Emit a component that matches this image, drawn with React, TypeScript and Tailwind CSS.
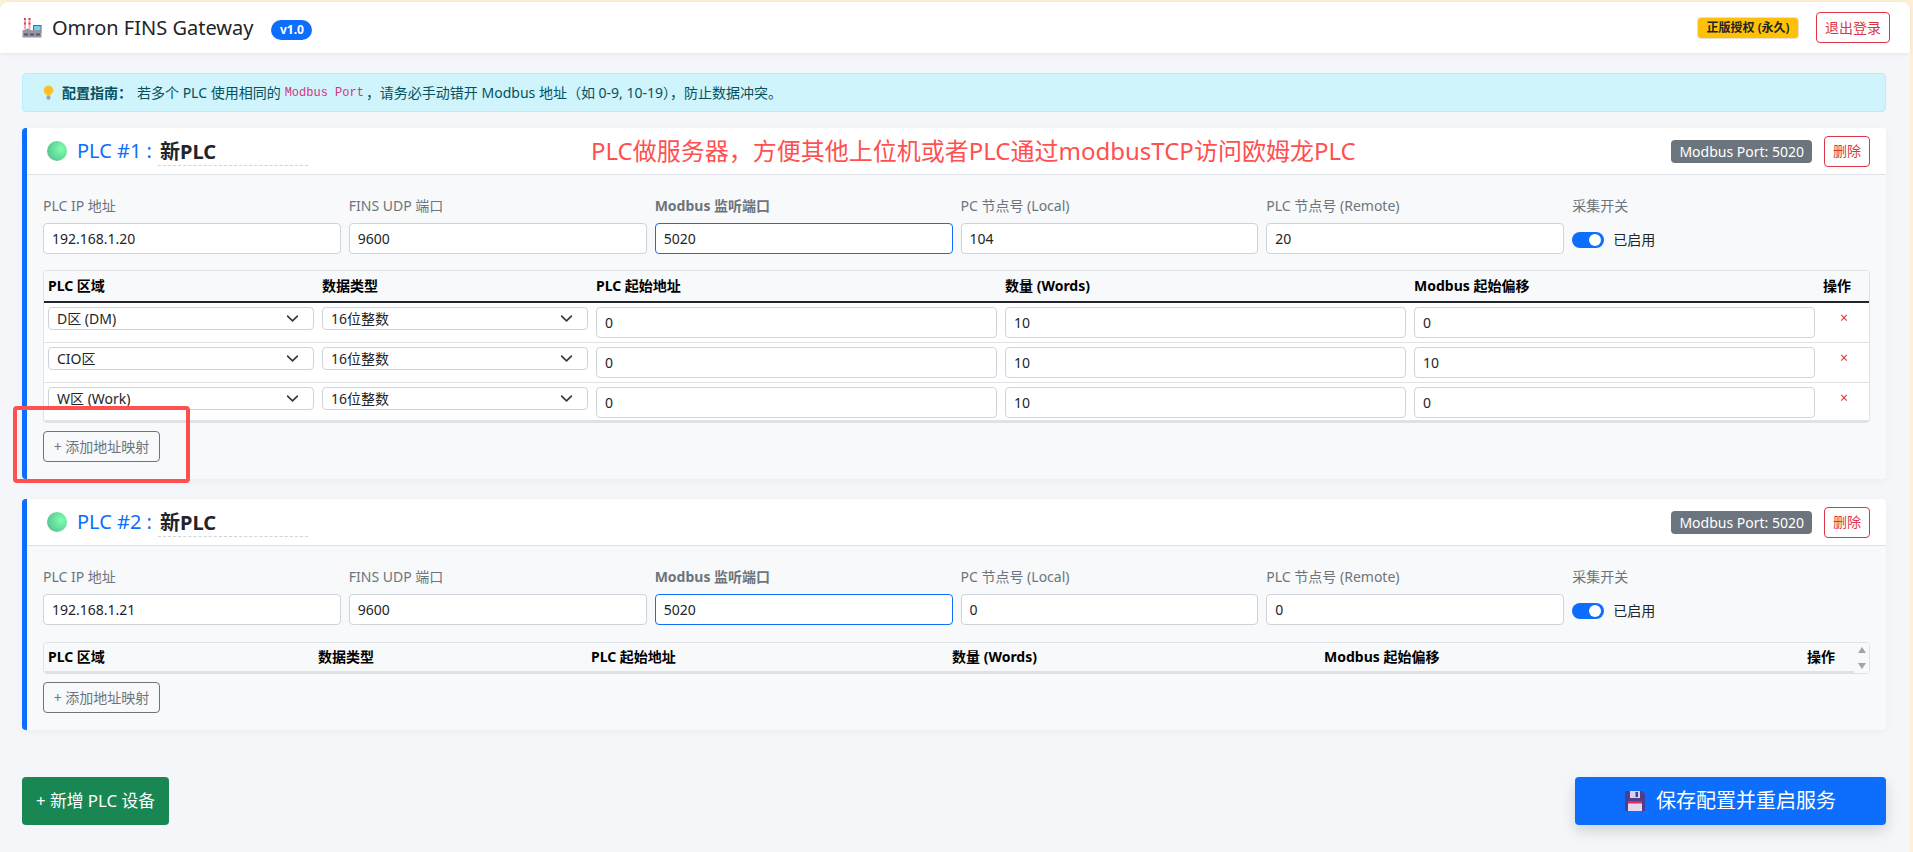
const font = '[font-family:"Noto_Sans","Noto_Sans_CJK_SC",sans-serif]'

function FactoryIcon() {
  return (
    <svg viewBox="0 0 20 20" className="w-5 h-5 shrink-0">
      <rect x="2" y="0" width="2" height="11" fill="#f4a7b5" />
      <rect x="6.500" y="0" width="2" height="11" fill="#f4a7b5" />
      <path d="M2 0h2v2h-2zM6.500 0h2v2h-2zM2 4.500h2v2h-2zM6.500 4.500h2v2h-2z" fill="#e0455f" />
      <rect x="11" y="7" width="8.500" height="8" fill="#5b6a78" />
      <path d="M12 8h6.500v6h-6.500z" fill="#5ec8ef" />
      <path d="M14 8v6M16.200 8v6M12 10h6.500M12 12h6.500" stroke="#8fdcf5" strokeWidth="0.600" />
      <path d="M0.500 19.500v-7l5-2 5 2v-0.500h9v7.500z" fill="#9a93a0" />
      <path d="M2 15.500h4v2h-4zM8 15.500h4v2h-4zM14 15.500h4v2h-4z" fill="#5a5563" />
    </svg>
  )
}

function BulbIcon() {
  return (
    <svg viewBox="0 0 11 15" className="w-[11px] h-[15px] shrink-0">
      <path d="M5.500 0.500a4.800 4.800 0 0 0-2.600 8.800c.6.500.8 1.100.8 1.900h3.600c0-.8.200-1.400.8-1.900a4.800 4.800 0 0 0-2.600-8.800z" fill="#fbc02d" />
      <path d="M3.700 11h3.600v2.600l-.9 1.100h-1.800l-.9-1.100z" fill="#a79fb0" />
    </svg>
  )
}

function SaveIcon() {
  return (
    <svg viewBox="0 0 20 20" className="w-5 h-5 shrink-0">
      <path d="M1 0h16l3 3v17h-20v-19z" fill="#4d3f8f" />
      <rect x="5" y="0" width="10" height="7" fill="#d9d2e6" />
      <rect x="10.500" y="1" width="2.500" height="5" fill="#4d3f8f" />
      <rect x="3" y="10" width="14" height="10" fill="#e4d9ee" />
      <rect x="3" y="10" width="14" height="2.500" fill="#dc3050" />
    </svg>
  )
}

function TextInput({ value, active }: { value: string; active?: boolean }) {
  return (
    <input
      defaultValue={value}
      className={`block w-full h-[31px] px-2 bg-white border rounded text-sm text-[#212529] outline-none ${active ? 'border-[#0d6efd]' : 'border-[#ced4da]'}`}
    />
  )
}

function Select({ value }: { value: string }) {
  return (
    <div className="relative w-full h-[23px]">
      <select
        defaultValue={value}
        className="block w-full h-[23px] pl-2 pr-6 bg-white border border-[#ced4da] rounded text-sm leading-[20px] text-[#212529] appearance-none outline-none"
      >
        <option>{value}</option>
      </select>
      <svg viewBox="0 0 16 16" className="absolute right-[15px] top-[5px] w-[13px] h-[13px]" fill="none" stroke="#343a40" strokeWidth="2" strokeLinecap="round" strokeLinejoin="round">
        <path d="m2 5 6 6 6-6" />
      </svg>
    </div>
  )
}

function Field({ label, value, bold, active }: { label: string; value: string; bold?: boolean; active?: boolean }) {
  return (
    <div className="flex flex-col">
      <label className={`h-[21px] mb-[7px] text-sm leading-[21px] text-[#6c757d] ${bold ? 'font-bold' : ''}`}>{label}</label>
      <TextInput value={value} active={active} />
    </div>
  )
}

const fullCols = 'grid-cols-[274px_274px_409px_409px_409px_50px]'
const emptyCols = 'grid-cols-[270px_273px_361px_372px_483px_51px]'
const headers = ['PLC 区域', '数据类型', 'PLC 起始地址', '数量 (Words)', 'Modbus 起始偏移', '操作']

type Row = { area: string; start: string; count: string; offset: string }

function MapTable({ rows, nodeScroll }: { rows: Row[]; nodeScroll?: boolean }) {
  const cols = nodeScroll ? emptyCols : fullCols
  return (
    <div className="relative border border-[#dee2e6] rounded bg-white overflow-hidden">
      <div className={`grid ${cols} items-center bg-[#f8f9fa] text-sm font-bold text-black ${rows.length ? 'border-b-2 border-b-[#212529] h-[32px]' : 'border-b-2 border-b-[#dee2e6] h-[30px]'}`}>
        {headers.map(h => (
          <div key={h} className="px-1 whitespace-nowrap">{h}</div>
        ))}
      </div>
      {rows.map((r, i) => (
        <div key={i} className={`grid ${cols} pt-1 ${i < rows.length - 1 ? 'h-[40px] border-b border-[#dee2e6]' : 'h-[39px] border-b-2 border-[#dee2e6]'}`}>
          <div className="px-1"><Select value={r.area} /></div>
          <div className="px-1"><Select value="16位整数" /></div>
          <div className="px-1"><TextInput value={r.start} /></div>
          <div className="px-1"><TextInput value={r.count} /></div>
          <div className="px-1"><TextInput value={r.offset} /></div>
          <div className="px-1 flex justify-center pt-[2px]">
            <span className="text-sm leading-[18px] text-[#dc3545]">×</span>
          </div>
        </div>
      ))}
      {nodeScroll && (
        <div className="absolute right-0 top-0 bottom-0 w-[15px] bg-[#f8f9fa] flex flex-col items-center justify-between py-[4px]">
          <svg viewBox="0 0 8 6" className="w-2 h-[6px]"><path d="M4 0 8 6H0z" fill="#a3a3a3" /></svg>
          <svg viewBox="0 0 8 6" className="w-2 h-[6px]"><path d="M4 6 8 0H0z" fill="#a3a3a3" /></svg>
        </div>
      )}
    </div>
  )
}

type Plc = { no: number; ip: string; local: string; remote: string; rows: Row[] }

function PlcCard({ plc, note }: { plc: Plc; note?: string }) {
  return (
    <section className="bg-[#f8f9fa] border-l-[5px] border-[#0d6efd] rounded shadow-[0_2px_8px_rgba(0,0,0,0.04)]">
      <div className="h-[47px] px-4 bg-white border-b border-[#dee2e6] flex items-center rounded-tr">
        <span className="w-5 h-5 ml-1 mr-[10px] rounded-full bg-[radial-gradient(circle_at_70%_40%,#7dffb0,#4fb585)]" />
        <span className="text-xl text-[#0d6efd] whitespace-nowrap">PLC #{plc.no} :</span>
        <input
          defaultValue="新PLC"
          className="ml-[6px] w-[150px] h-[30px] px-[2px] bg-transparent border-b border-dashed border-[#ced4da] text-xl font-bold text-[#212529] outline-none"
        />
        <div className="flex-1 pl-[283px]">
          {note && <span className="text-2xl text-[#ff5050] whitespace-nowrap">{note}</span>}
        </div>
        <span className="h-[23px] px-2 rounded bg-[#6c757d] text-sm leading-[23px] text-white whitespace-nowrap">Modbus Port: 5020</span>
        <button className="ml-3 w-[46px] h-[31px] border border-[#dc3545] rounded text-sm text-[#dc3545]">删除</button>
      </div>
      <div className="px-4 pt-5 pb-[17px]">
        <div className="grid grid-cols-6 gap-x-2">
          <Field label="PLC IP 地址" value={plc.ip} />
          <Field label="FINS UDP 端口" value="9600" />
          <Field label="Modbus 监听端口" value="5020" bold active />
          <Field label="PC 节点号 (Local)" value={plc.local} />
          <Field label="PLC 节点号 (Remote)" value={plc.remote} />
          <div className="flex flex-col">
            <label className="h-[21px] mb-[7px] text-sm leading-[21px] text-[#6c757d]">采集开关</label>
            <div className="h-[31px] flex items-center gap-[9px] pt-[2px]">
              <span className="w-8 h-4 rounded-full bg-[#0d6efd] flex justify-end items-center px-[3px]">
                <span className="w-3 h-3 rounded-full bg-white" />
              </span>
              <span className="text-sm text-[#212529]">已启用</span>
            </div>
          </div>
        </div>
        <div className={plc.rows.length ? 'mt-4' : 'mt-[17px]'}>
          <MapTable rows={plc.rows} nodeScroll={!plc.rows.length} />
        </div>
        <button className="mt-2 block w-[117px] h-[31px] border border-[#6c757d] rounded text-sm text-[#6c757d] whitespace-nowrap">+ 添加地址映射</button>
      </div>
    </section>
  )
}

const plcs: Plc[] = [
  {
    no: 1, ip: '192.168.1.20', local: '104', remote: '20',
    rows: [
      { area: 'D区 (DM)', start: '0', count: '10', offset: '0' },
      { area: 'CIO区', start: '0', count: '10', offset: '10' },
      { area: 'W区 (Work)', start: '0', count: '10', offset: '0' },
    ],
  },
  { no: 2, ip: '192.168.1.21', local: '0', remote: '0', rows: [] },
]

export default function App() {
  return (
    <div className={`relative h-[852px] overflow-hidden bg-[#fdf0d5] pt-[2px] pr-[3px] ${font}`}>
      <div className="h-full bg-[#f4f6f9] rounded-t-lg">
        <header className="h-[51px] pl-[22px] pr-5 bg-white rounded-t-lg shadow-[0_1px_4px_rgba(0,0,0,0.08)] flex items-center">
          <FactoryIcon />
          <h1 className="ml-[10px] text-xl text-[#212529]">Omron FINS Gateway</h1>
          <span className="ml-[18px] mt-1 h-5 w-[41px] text-center rounded-full bg-[#0d6efd] text-xs leading-5 font-bold text-white">v1.0</span>
          <div className="ml-auto flex items-center gap-[17px]">
            <span className="w-[102px] h-[22px] rounded bg-[#ffc107] border border-[#e6e2d0] text-xs leading-5 font-semibold text-center text-[#212529] whitespace-nowrap">正版授权 (永久)</span>
            <button className="w-[74px] h-[31px] border border-[#dc3545] rounded text-sm text-[#dc3545]">退出登录</button>
          </div>
        </header>

        <main className="pl-[22px] pr-[24px] pt-5">
          <div className="h-[39px] pl-[20px] bg-[#cff4fc] border border-[#b6effb] rounded flex items-center text-sm text-[#055160] whitespace-nowrap">
            <BulbIcon />
            <b className="ml-2 font-bold">配置指南：</b>
            <span className="ml-[5px]">若多个 PLC 使用相同的 </span>
            <code className="mx-1 text-xs text-[#d63384] [font-family:'Liberation_Mono',monospace]">Modbus Port</code>
            <span className="-ml-[2px]">，请务必手动错开 Modbus 地址（如 0-9, 10-19），防止数据冲突。</span>
          </div>

          <div className="mt-4 flex flex-col gap-5">
            <PlcCard plc={plcs[0]} note="PLC做服务器，方便其他上位机或者PLC通过modbusTCP访问欧姆龙PLC" />
            <PlcCard plc={plcs[1]} />
          </div>

          <div className="mt-[47px] flex justify-between">
            <button className="w-[147px] h-12 rounded bg-[#198754] text-[16.800px] text-white whitespace-nowrap">+ 新增 PLC 设备</button>
            <button className="w-[311px] h-12 rounded bg-[#0d6efd] text-xl text-white flex items-center justify-center gap-[11px] shadow-[0_6px_14px_rgba(0,0,0,0.15)]">
              <SaveIcon />
              保存配置并重启服务
            </button>
          </div>
        </main>
      </div>

      {/* red annotation box drawn over the screenshot */}
      <div className="absolute left-[13px] top-[406px] w-[177px] h-[77px] border-4 border-[#ff5050] rounded-sm pointer-events-none" />
    </div>
  )
}
